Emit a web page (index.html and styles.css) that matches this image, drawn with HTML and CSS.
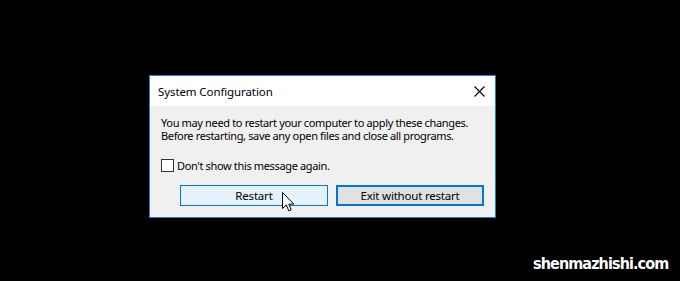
FILE: index.html
```html
<!DOCTYPE html>
<html>
<head>
<meta charset="utf-8">
<link rel="stylesheet" href="styles.css">
</head>
<body>
<div class="stage">
  <div class="dialog">
    <div class="titlebar">
      <span class="title">System Configuration</span>
      <svg class="close" width="11" height="11" viewBox="0 0 11 11"><path d="M0.5 0.5L10.5 10.5M10.5 0.5L0.5 10.5" stroke="#000" stroke-width="1.1" fill="none"/></svg>
    </div>
    <div class="content">
      <p class="msg"><span class="line">You may need to restart your computer to apply these changes.</span><span class="line">Before restarting, save any open files and close all programs.</span></p>
      <label class="check"><span class="box"></span><span>Don't show this message again.</span></label>
      <div class="buttons">
        <button class="btn hover">Restart</button>
        <button class="btn default">Exit without restart</button>
      </div>
    </div>
    <svg class="cursor" width="13" height="21" viewBox="0 0 13 21"><path d="M0.5 0.5V16.5L4.3 12.9L6.8 18.9L9.2 17.9L6.8 12.1H11.8Z" fill="#fff" stroke="#000" stroke-width="1" stroke-linejoin="miter"/></svg>
  </div>
  <div class="watermark">shenmazhishi.com</div>
</div>
</body>
</html>
```
FILE: styles.css
```css
html, body {
  margin: 0;
  padding: 0;
  background: #000;
}
.stage {
  position: relative;
  width: 680px;
  height: 281px;
  background: #000;
  padding-top: 75px;
  padding-left: 149px;
  box-sizing: border-box;
}
.dialog {
  position: relative;
  width: 347px;
  height: 143px;
  box-sizing: border-box;
  border: 1px solid #1a7fd4;
  background: #f0f0f0;
  font-family: "Noto Sans", "DejaVu Sans", sans-serif;
  font-size: 11px;
  color: #000;
  white-space: nowrap;
}
.titlebar {
  height: 30px;
  background: #fff;
  display: flex;
  align-items: center;
  justify-content: space-between;
  padding: 0 10px 0 8px;
}
.title {
  font-size: 11.5px;
  color: #000;
  letter-spacing: -0.1px;
}
.close {
  display: block;
}
.content {
  padding: 10px 0 0 11px;
}
.msg {
  margin: 0;
  display: flex;
  flex-direction: column;
  letter-spacing: -0.35px;
}
.line {
  display: block;
  height: 13px;
  line-height: 13px;
}
.check {
  display: flex;
  align-items: center;
  gap: 3px;
  margin-top: 16px;
  height: 15px;
  letter-spacing: -0.35px;
}
.box {
  width: 11px;
  height: 11px;
  border: 1px solid #333;
  background: #fff;
}
.buttons {
  display: flex;
  gap: 8px;
  margin-top: 12px;
  padding-left: 19px;
}
.btn {
  width: 148px;
  height: 21px;
  box-sizing: border-box;
  font-family: "Noto Sans", "DejaVu Sans", sans-serif;
  font-size: 11.5px;
  padding: 0;
  color: #000;
  letter-spacing: -0.2px;
}
.btn.hover {
  background: #e5f1fb;
  border: 1px solid #0078d7;
}
.btn.default {
  background: #e1e1e1;
  border: 2px solid #0078d7;
}
.cursor {
  position: absolute;
  left: 132px;
  top: 116px;
}
.watermark {
  position: absolute;
  left: 533px;
  top: 254px;
  color: #fff;
  font-family: "DejaVu Sans Condensed", "DejaVu Sans", sans-serif;
  font-weight: bold;
  font-size: 16px;
  letter-spacing: -0.9px;
}
```
